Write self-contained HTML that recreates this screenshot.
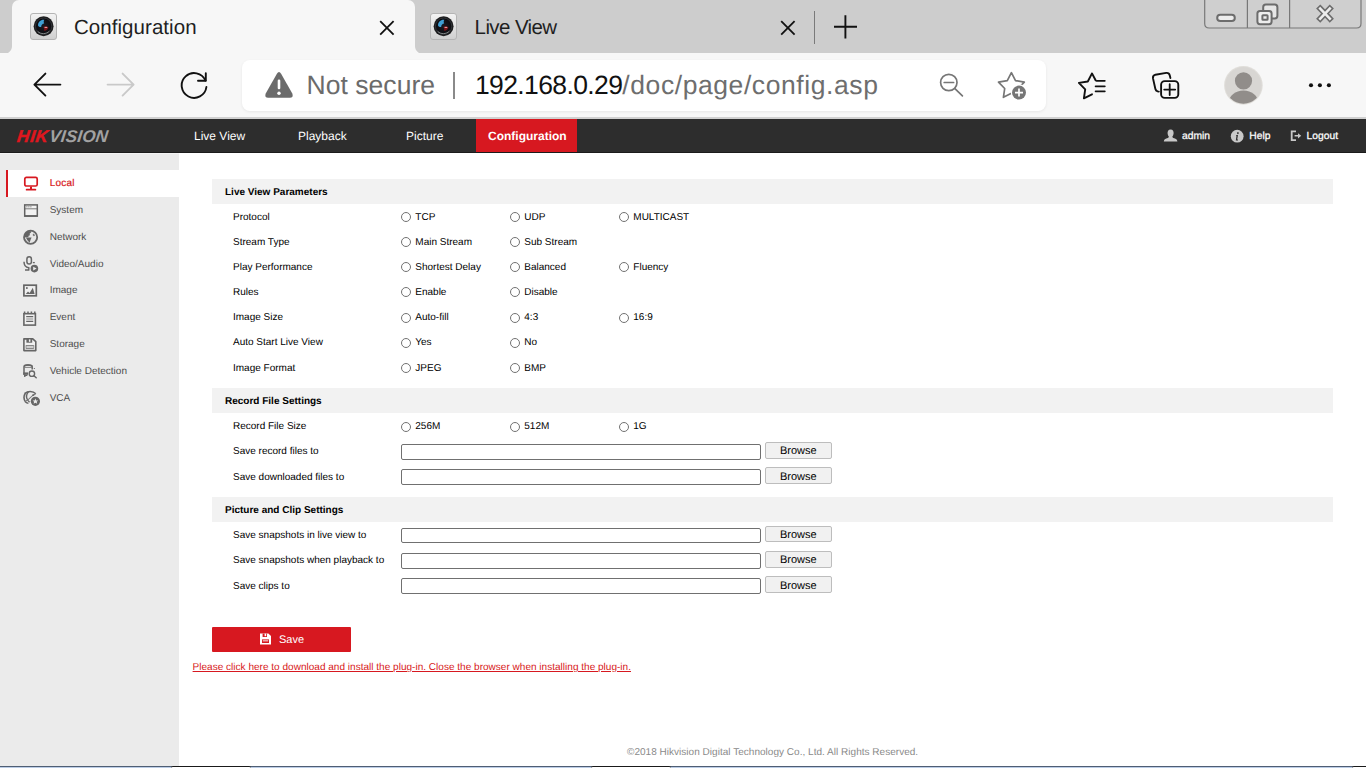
<!DOCTYPE html>
<html lang="en">
<head>
<meta charset="utf-8">
<title>Configuration</title>
<style>
html,body{margin:0;padding:0;}
body{width:1366px;height:768px;overflow:hidden;position:relative;background:#fff;font-family:"Liberation Sans",sans-serif;color:#000;text-rendering:geometricPrecision;}
.abs{position:absolute;}
/* ---------- browser chrome ---------- */
#tabstrip{left:0;top:0;width:1366px;height:53.5px;background:#cdcdcd;}
#toolbar{left:0;top:53px;width:1366px;height:64px;background:#f7f7f7;}
#tbline{left:0;top:117px;width:1366px;height:2px;background:#d0d0d0;}
#tab1{left:12px;top:0;width:403px;height:54px;background:#f7f7f7;border-radius:7px 7px 0 0;}
#tab1:before,#tab1:after{content:"";position:absolute;bottom:0;width:8px;height:8px;background:radial-gradient(circle at 0 0,rgba(247,247,247,0) 7.5px,#f7f7f7 8.5px);}
#tab1:before{left:-8px;}
#tab1:after{right:-8px;background:radial-gradient(circle at 100% 0,rgba(247,247,247,0) 7.5px,#f7f7f7 8.5px);}
.tabtitle{font-size:20.5px;color:#1f1f1f;white-space:nowrap;line-height:24px;}
#addr{left:242.3px;top:60px;width:803.7px;height:51px;background:#fff;border-radius:8px;box-shadow:0 1px 3px rgba(0,0,0,0.07);}
.urltxt{font-size:26.5px;line-height:34px;white-space:nowrap;}
/* ---------- page ---------- */
#nav{left:0;top:119px;width:1366px;height:33px;background:#2d2d2d;border-bottom:1px solid #1b1b1b;}
.navitem{top:0;height:34px;line-height:34px;color:#fff;font-size:12px;white-space:nowrap;}
#navactive{left:476px;top:0;width:101px;height:33px;background:#d71820;}
#side{left:0;top:153px;width:179px;height:613px;background:linear-gradient(#f3f3f3,#f3f3f3) 0 0/100% 1px no-repeat,#ebebeb;}
#sideactive{left:6px;top:17px;width:173px;height:27px;background:#fff;border-left:2px solid #d71820;box-sizing:border-box;}
.sitem{left:49.7px;font-size:10px;line-height:12px;color:#4d4d4d;white-space:nowrap;}
.sec{left:212px;width:1121px;height:25px;background:#f2f2f2;}
.sec span{position:absolute;left:13px;top:8px;font-size:10px;line-height:12px;font-weight:bold;color:#000;white-space:nowrap;}
.lbl{left:233px;font-size:10px;line-height:12px;color:#000;white-space:nowrap;}
.opt{font-size:10px;line-height:12px;color:#000;white-space:nowrap;}
.radio{width:8px;height:8px;border:1px solid #727272;border-radius:50%;background:#fff;}
.inp{left:401px;width:358px;height:13.4px;border:1px solid #707070;border-radius:2px;background:#fff;}
.btn{left:765px;width:64.7px;height:14.4px;border:1px solid #bdbdbd;background:#f1f1f1;border-radius:2px;font-size:11px;line-height:16.2px;text-align:center;color:#000;overflow:hidden;}
#save{left:212px;top:627px;width:139px;height:25px;background:#d71820;border-radius:1px;}
#save span{position:absolute;left:67px;top:7px;font-size:11px;line-height:13px;color:#fff;}
#plug{left:192.6px;top:662px;letter-spacing:0.02px;font-size:10px;line-height:12px;color:#d71820;text-decoration:underline;white-space:nowrap;}
#foot{left:627px;top:747px;letter-spacing:0.025px;font-size:10px;line-height:12px;color:#8a8a8a;white-space:nowrap;}
#botline{left:0;top:766px;width:1366px;height:1px;background:#4f5e74;border-bottom:1px solid #bccde6;}
.botbox{top:766px;height:1px;background:#fff;border-top:1px solid #1a1a1a;border-radius:2px 2px 0 0;}
</style>
</head>
<body>
<!-- browser chrome -->
<div id="tabstrip" class="abs"></div>
<div id="toolbar" class="abs"></div>
<div id="tbline" class="abs"></div>
<div id="tab1" class="abs"></div>
<div class="abs tabtitle" style="left:74px;top:16px;letter-spacing:0.05px;">Configuration</div>
<div class="abs tabtitle" style="left:474.6px;top:16px;letter-spacing:-0.6px;">Live View</div>
<div id="addr" class="abs"></div>
<div class="abs urltxt" style="left:306.6px;top:68px;color:#6b6b6b;letter-spacing:0.03px;">Not secure</div>
<div class="abs" style="left:453px;top:72px;width:1.8px;height:27px;background:#8a8a8a;"></div>
<div class="abs urltxt" style="left:475px;top:68px;color:#111;letter-spacing:-0.62px;">192.168.0.29<span style="color:#6e6e6e;letter-spacing:0.58px;">/doc/page/config.asp</span></div>


<!-- favicons -->
<svg class="abs" style="left:29px;top:12px;" width="29" height="29" viewBox="0 0 29 29">
  <defs>
    <linearGradient id="fvb" x1="0" y1="0" x2="0" y2="1"><stop offset="0" stop-color="#f4f4f4"/><stop offset="1" stop-color="#cfcfcf"/></linearGradient>
    <radialGradient id="fvl" cx="0.5" cy="0.5" r="0.5"><stop offset="0" stop-color="#1a1a22"/><stop offset="0.8" stop-color="#0c0c10"/><stop offset="1" stop-color="#2a2a2a"/></radialGradient>
  </defs>
  <g>
    <rect x="1.5" y="1.5" width="26" height="26" rx="2.5" fill="url(#fvb)" stroke="#b4b4b4" stroke-width="1"/>
    <circle cx="14.6" cy="14.2" r="10" fill="url(#fvl)"/>
    <circle cx="14.6" cy="14.2" r="8.2" fill="none" stroke="#3a3d40" stroke-width="0.8"/>
    <path d="M9 13.4 C9 9.6 12.2 7.2 15.4 7.8 C14.4 9 14.6 10.4 15.2 11.4 C13.4 11.6 12 13 12.2 15 C11 15.2 9.6 14.6 9 13.4 Z" fill="#3f9fd4"/>
    <path d="M14.2 15 C16 13.6 18.4 14 19.4 15.6 C18.8 18 16.6 19.2 14.8 18.6 C15.6 17.4 15.2 16 14.2 15 Z" fill="#7a1216"/>
    <rect x="15.6" y="14.9" width="2.6" height="1.1" fill="#e29a9a"/>
    <path d="M8.8 19.4 C11.6 22.4 17.4 22.4 20.4 19" fill="none" stroke="#9aa0a0" stroke-width="0.8"/>
  </g>
</svg>
<svg class="abs" style="left:429.3px;top:12px;" width="29" height="29" viewBox="0 0 29 29"><defs>
    <linearGradient id="fvb2" x1="0" y1="0" x2="0" y2="1"><stop offset="0" stop-color="#f4f4f4"/><stop offset="1" stop-color="#cfcfcf"/></linearGradient>
    <radialGradient id="fvl2" cx="0.5" cy="0.5" r="0.5"><stop offset="0" stop-color="#1a1a22"/><stop offset="0.8" stop-color="#0c0c10"/><stop offset="1" stop-color="#2a2a2a"/></radialGradient>
  </defs><g>
    <rect x="1.5" y="1.5" width="26" height="26" rx="2.5" fill="url(#fvb2)" stroke="#b4b4b4" stroke-width="1"/>
    <circle cx="14.6" cy="14.2" r="10" fill="url(#fvl2)"/>
    <circle cx="14.6" cy="14.2" r="8.2" fill="none" stroke="#3a3d40" stroke-width="0.8"/>
    <path d="M9 13.4 C9 9.6 12.2 7.2 15.4 7.8 C14.4 9 14.6 10.4 15.2 11.4 C13.4 11.6 12 13 12.2 15 C11 15.2 9.6 14.6 9 13.4 Z" fill="#3f9fd4"/>
    <path d="M14.2 15 C16 13.6 18.4 14 19.4 15.6 C18.8 18 16.6 19.2 14.8 18.6 C15.6 17.4 15.2 16 14.2 15 Z" fill="#7a1216"/>
    <rect x="15.6" y="14.9" width="2.6" height="1.1" fill="#e29a9a"/>
    <path d="M8.8 19.4 C11.6 22.4 17.4 22.4 20.4 19" fill="none" stroke="#9aa0a0" stroke-width="0.8"/>
  </g></svg>

<!-- tab close buttons, separator, new tab -->
<svg class="abs" style="left:376px;top:17px;" width="22" height="22" viewBox="0 0 22 22"><path d="M4.2 4.2 L17.6 17.6 M17.6 4.2 L4.2 17.6" stroke="#111" stroke-width="1.8" fill="none"/></svg>
<svg class="abs" style="left:777px;top:17px;" width="22" height="22" viewBox="0 0 22 22"><path d="M4.2 4.2 L17.6 17.6 M17.6 4.2 L4.2 17.6" stroke="#111" stroke-width="1.8" fill="none"/></svg>
<div class="abs" style="left:814px;top:11px;width:1.3px;height:33px;background:#7a7a7a;"></div>
<svg class="abs" style="left:832px;top:13px;" width="28" height="28" viewBox="0 0 28 28"><path d="M2 13.8 H25 M13.4 2.2 V25.4" stroke="#111" stroke-width="1.9" fill="none"/></svg>

<!-- window controls -->
<svg class="abs" style="left:1200px;top:0;" width="166" height="32" viewBox="0 0 166 32">
  <path d="M4.7 -1 V23.5 Q4.7 28 9.2 28 H156.5 Q161 28 161 23.5 V-1" fill="#cfcfcf" stroke="#787878" stroke-width="1.2"/>
  <path d="M47.4 0 V28 M89.6 0 V28" stroke="#787878" stroke-width="1.2"/>
  <rect x="17.2" y="14.8" width="17.6" height="6.2" rx="3.1" fill="#ededed" stroke="#6c6c6c" stroke-width="2"/>
  <rect x="63.2" y="4.6" width="14.2" height="13.8" rx="2.6" fill="#e6e6e6" stroke="#6c6c6c" stroke-width="2"/>
  <rect x="57.4" y="11" width="14.2" height="13.2" rx="2.6" fill="#ededed" stroke="#6c6c6c" stroke-width="2"/>
  <rect x="62.4" y="15.2" width="5.2" height="4.6" rx="0.6" fill="#ededed" stroke="#6c6c6c" stroke-width="2"/>
  <path d="M120.2 8.6 L129.8 18.6 M129.8 8.6 L120.2 18.6" stroke="#6c6c6c" stroke-width="5.8" stroke-linecap="square" fill="none"/>
  <path d="M120.2 8.6 L129.8 18.6 M129.8 8.6 L120.2 18.6" stroke="#ededed" stroke-width="2.6" stroke-linecap="square" fill="none"/>
</svg>

<!-- toolbar icons -->
<svg class="abs" style="left:29.5px;top:70px;" width="34" height="30" viewBox="0 0 34 30"><path d="M30.4 14.6 H4.6 M15.4 3.6 L4.4 14.6 L15.4 25.6" stroke="#111" stroke-width="1.9" fill="none" stroke-linecap="round" stroke-linejoin="round"/></svg>
<svg class="abs" style="left:104px;top:70px;" width="34" height="30" viewBox="0 0 34 30"><path d="M3.6 14.6 H29.4 M18.6 3.6 L29.6 14.6 L18.6 25.6" stroke="#c9c9c9" stroke-width="1.9" fill="none" stroke-linecap="round" stroke-linejoin="round"/></svg>
<svg class="abs" style="left:177.3px;top:71px;" width="34" height="34" viewBox="0 0 34 34"><path d="M28.5 9.6 A12.4 12.4 0 1 0 29.4 16" stroke="#111" stroke-width="1.9" fill="none" stroke-linecap="round"/><path d="M21 9.8 H28.8 V2.2" stroke="#111" stroke-width="1.9" fill="none" stroke-linecap="round" stroke-linejoin="round"/></svg>
<svg class="abs" style="left:263px;top:70px;" width="32" height="30" viewBox="0 0 32 30"><path d="M13.9 3.7 Q16 0.4 18.1 3.7 L29.3 23.4 Q30.8 27.6 26.8 27.8 H5.2 Q1.2 27.6 2.7 23.4 Z" fill="#6b6b6b"/><rect x="14.7" y="9.6" width="2.6" height="9.6" rx="1.2" fill="#fff"/><circle cx="16" cy="23.2" r="1.7" fill="#fff"/></svg>
<svg class="abs" style="left:936px;top:70px;" width="32" height="32" viewBox="0 0 32 32"><circle cx="12.8" cy="12.5" r="8.2" stroke="#767676" stroke-width="1.7" fill="none"/><path d="M8.2 12.5 H17.6 M18.9 18.7 L26.4 25.9" stroke="#767676" stroke-width="1.7" fill="none" stroke-linecap="round"/></svg>
<svg class="abs" style="left:995px;top:69px;" width="36" height="34" viewBox="0 0 36 34"><path d="M16.4 3.7 L20.5 11.6 L29.3 13.1 L23.1 19.5 L24.4 28.3 L16.4 24.3 L8.4 28.3 L9.7 19.5 L3.5 13.1 L12.3 11.6 Z" stroke="#767676" stroke-width="1.7" fill="none" stroke-linejoin="round"/><circle cx="24" cy="23.6" r="8.3" fill="#fff"/><circle cx="24" cy="23.6" r="7" fill="#767676"/><path d="M20 23.6 H28 M24 19.6 V27.6" stroke="#fff" stroke-width="1.7"/></svg>
<svg class="abs" style="left:1075px;top:70px;" width="34" height="32" viewBox="0 0 34 32"><path d="M20.6 10.3 L17 3.4 L12.8 11.5 L3.9 12.9 L10.2 19.4 L8.9 28.4 L17 24.3" stroke="#111" stroke-width="1.9" fill="none" stroke-linejoin="round" stroke-linecap="round"/><path d="M21.6 10.8 H29.8 M20.6 16.3 H29.8 M20.6 21.3 H29.8" stroke="#111" stroke-width="1.8" fill="none" stroke-linecap="round"/></svg>
<svg class="abs" style="left:1149px;top:69px;" width="34" height="34" viewBox="0 0 34 34"><path d="M9.8 22.6 L8.6 22.4 Q6.8 21.8 6.4 20 L4 9.4 Q3.5 6.4 6.4 5.7 L17.2 3.9 Q20.1 3.6 20.8 6.4 L21.4 9" stroke="#111" stroke-width="1.9" fill="none" stroke-linecap="round"/><rect x="12.1" y="12.1" width="17.2" height="16.8" rx="3.6" stroke="#111" stroke-width="1.9" fill="none"/><path d="M15.2 20.6 H26.2 M20.7 15.2 V26" stroke="#111" stroke-width="1.8" fill="none" stroke-linecap="round"/></svg>
<svg class="abs" style="left:1223px;top:65px;" width="42" height="42" viewBox="0 0 42 42"><defs><clipPath id="avc"><circle cx="20.4" cy="20.4" r="18.3"/></clipPath></defs><circle cx="20.4" cy="20.4" r="19.3" fill="#e0deda"/><circle cx="20.4" cy="20.4" r="18.3" fill="#d8d6d3"/><g clip-path="url(#avc)"><circle cx="20.5" cy="15.8" r="8.6" fill="#918d8a"/><ellipse cx="20.5" cy="37.5" rx="14.6" ry="12" fill="#918d8a"/></g></svg>
<svg class="abs" style="left:1306px;top:80px;" width="28" height="10" viewBox="0 0 28 10"><circle cx="5" cy="5.3" r="2.05" fill="#111"/><circle cx="13.9" cy="5.3" r="2.05" fill="#111"/><circle cx="22.9" cy="5.3" r="2.05" fill="#111"/></svg>

<!-- page nav -->
<div id="nav" class="abs">
  <div id="navactive" class="abs"></div>

  <div class="abs" id="logo" style="left:15.6px;top:8px;height:20px;line-height:20px;font-size:17px;font-weight:bold;font-style:italic;white-space:nowrap;letter-spacing:0.4px;transform:skewX(-7deg);transform-origin:0 100%;"><span style="color:#e0161e;-webkit-text-stroke:0.45px #e0161e;letter-spacing:0.75px;">HIK</span><span style="color:#a2a2a2;letter-spacing:0.2px;margin-left:0.6px;">VISION</span></div>
  <svg class="abs" style="left:1163px;top:10px;" width="16" height="14" viewBox="0 0 16 14"><path d="M7.6 0.6 C10 0.6 10.8 2.6 10.6 4.4 C10.4 6 9.8 6.8 9.4 7.4 C9.4 8.4 9.8 8.8 11.2 9.2 C13 9.8 14.2 10.2 14.4 12.6 H0.8 C1 10.2 2.2 9.8 4 9.2 C5.4 8.8 5.8 8.4 5.8 7.4 C5.4 6.8 4.8 6 4.6 4.4 C4.4 2.6 5.2 0.6 7.6 0.6 Z" fill="#c8c8c8"/></svg>
  <svg class="abs" style="left:1230px;top:10px;" width="15" height="15" viewBox="0 0 15 15"><circle cx="7.2" cy="7.2" r="6.4" fill="#c8c8c8"/><path d="M7.9 3.2 a0.9 0.9 0 1 1 -0.01 0 Z M6.2 5.9 H8 L7.2 10.6 H8 V11.4 H5.8 L6.5 6.8 H6 Z" fill="#2d2d2d"/></svg>
  <svg class="abs" style="left:1290px;top:11px;" width="13" height="12" viewBox="0 0 13 12"><path d="M6 1.4 H1.7 V10.2 H6" stroke="#c8c8c8" stroke-width="1.8" fill="none"/><path d="M4.6 5 H8 V3.2 L11.2 5.8 L8 8.4 V6.6 H4.6 Z" fill="#c8c8c8"/></svg>
  <div class="abs navitem" style="left:194px;">Live View</div>
  <div class="abs navitem" style="left:298px;">Playback</div>
  <div class="abs navitem" style="left:406px;">Picture</div>
  <div class="abs navitem" style="left:488px;font-weight:bold;">Configuration</div>
  <div class="abs navitem" style="left:1182px;top:1px;font-size:10.3px;-webkit-text-stroke:0.25px #fff;">admin</div>
  <div class="abs navitem" style="left:1249.3px;top:1px;font-size:10.3px;-webkit-text-stroke:0.25px #fff;">Help</div>
  <div class="abs navitem" style="left:1306.5px;top:1px;font-size:10.3px;-webkit-text-stroke:0.25px #fff;">Logout</div>
</div>

<!-- sidebar -->
<div id="side" class="abs">
  <div id="sideactive" class="abs"></div>

  <!-- sidebar icons (coords relative to #side: y = abs - 153) -->
  <svg class="abs" style="left:23px;top:23px;" width="16" height="15" viewBox="0 0 16 15"><rect x="1.8" y="1.4" width="12.4" height="8.6" rx="1.6" fill="none" stroke="#d71820" stroke-width="1.7"/><path d="M8 10.4 V13.4" stroke="#d71820" stroke-width="2"/><path d="M3.6 13.7 H12.4" stroke="#d71820" stroke-width="1.7" stroke-linecap="round"/></svg>
  <svg class="abs" style="left:23px;top:50px;" width="16" height="15" viewBox="0 0 16 15"><rect x="1.7" y="1.9" width="12.6" height="11.2" fill="#f2f2f2" stroke="#626262" stroke-width="1.5"/><path d="M1.7 5.8 H14.3" stroke="#6e6e6e" stroke-width="0.9"/><path d="M1.4 12.9 H14.6" stroke="#626262" stroke-width="1.5"/><path d="M3.4 3.8 H4.4 M5.4 3.8 H6.4 M7.4 3.8 H8.4" stroke="#555" stroke-width="0.9"/></svg>
  <svg class="abs" style="left:22px;top:76px;" width="18" height="17" viewBox="0 0 18 17"><circle cx="8.6" cy="8.3" r="6.6" fill="#e6e6e6" stroke="#666" stroke-width="1.8"/><path d="M2.4 8.4 C2.4 4.6 5 2.2 8.6 2 L9.2 3.2 L7.6 4.8 L8 6.2 L6.6 6.8 L6.4 8 Z" fill="#646464"/><path d="M3.8 8.4 H9.6 L8.6 10.8 L7.6 13.8 L5.4 11.2 Z" fill="#646464"/><path d="M11.4 4.4 L13.2 6.2 L11.8 7.2 L10.6 6 Z" fill="#777"/><path d="M2.8 9.6 L5 12.6 L7 14.4 L4.4 13.8 Z" fill="#6e6e6e"/></svg>
  <svg class="abs" style="left:22px;top:102px;" width="18" height="19" viewBox="0 0 18 19"><rect x="4.9" y="1.7" width="4.5" height="7.4" rx="2.25" fill="none" stroke="#666" stroke-width="1.5"/><path d="M2 6.8 C2 10.4 3.6 12.4 6.8 12.8 V14.8 M3 15 H7.4" fill="none" stroke="#666" stroke-width="1.5"/><path d="M10.8 7.6 H12.8" stroke="#666" stroke-width="1.3"/><circle cx="12.4" cy="13.6" r="3.8" fill="#666"/><path d="M11.2 11.7 L14.6 13.6 L11.2 15.5 Z" fill="#ebebeb"/></svg>
  <svg class="abs" style="left:22px;top:130px;" width="17" height="15" viewBox="0 0 17 15"><rect x="1.9" y="2.2" width="12.4" height="10.6" fill="#f0f0f0" stroke="#666" stroke-width="1.7"/><rect x="4" y="4.2" width="1.7" height="1.7" fill="#666"/><path d="M3.8 11 L6 8.4 L7.6 10 L10.8 4.8 L12.6 11 Z" fill="#666"/></svg>
  <svg class="abs" style="left:22px;top:157px;" width="16" height="17" viewBox="0 0 16 17"><rect x="1.9" y="3.7" width="11.5" height="11.4" fill="#f0f0f0" stroke="#666" stroke-width="1.6"/><path d="M2.6 1.4 V4 M6 1.4 V4 M9.4 1.4 V4 M12.8 1.4 V4" stroke="#666" stroke-width="1.5"/><path d="M4.2 6.6 H11.2 M4.2 11.4 H11.2" stroke="#666" stroke-width="1.1"/><path d="M4.2 9 H11.2" stroke="#999" stroke-width="1.1"/></svg>
  <svg class="abs" style="left:22px;top:184px;" width="16" height="16" viewBox="0 0 16 16"><path d="M1.9 1.9 H10.8 L13.8 4.6 V13.6 H1.9 Z" fill="#f0f0f0" stroke="#666" stroke-width="1.6" stroke-linejoin="round"/><rect x="4.4" y="1.8" width="5.8" height="3.9" fill="#666"/><rect x="6.9" y="2.4" width="1.5" height="2.4" fill="#f0f0f0"/><path d="M4 8.7 H11.8 M4 11.2 H11.8" stroke="#666" stroke-width="1.1"/><path d="M4 8.2 V11.7 M11.8 8.2 V11.7" stroke="#888" stroke-width="0.8"/></svg>
  <svg class="abs" style="left:22px;top:210px;" width="17" height="17" viewBox="0 0 17 17"><path d="M2 11.8 V3.6 Q2 1.9 5.8 1.9 H6.4 Q10.2 1.9 10.2 3.6 V6.6" fill="none" stroke="#666" stroke-width="1.5"/><path d="M2 2.9 Q6 1.2 10.2 2.9" fill="none" stroke="#666" stroke-width="1.6"/><path d="M2 4.4 H10.2" stroke="#777" stroke-width="0.9"/><path d="M1.3 9.4 H6 V11.8 H1.3 Z" fill="#666"/><path d="M2.8 11.6 V14 M2 12.4 H5.4" stroke="#666" stroke-width="1.4"/><circle cx="9.9" cy="10.7" r="2.7" fill="#ebebeb" stroke="#666" stroke-width="1.4"/><path d="M11.9 12.8 L14.2 14.8" stroke="#666" stroke-width="1.5" stroke-linecap="round"/><rect x="11.8" y="5" width="1" height="1" fill="#666"/></svg>
  <svg class="abs" style="left:23px;top:237px;" width="19" height="18" viewBox="0 0 19 18"><path d="M2.4 3 C0.6 6 0.8 9.6 2.6 12 C3.4 12.8 4.4 13.2 5.4 13.3" fill="none" stroke="#666" stroke-width="1.6"/><path d="M2 3.4 C4.6 1 9.8 0.6 12.8 3.8" fill="none" stroke="#666" stroke-width="1.5"/><path d="M5.4 1.8 C3.2 4.4 3 7.4 4.6 10 C5.2 11 5.8 11.6 6.6 12" fill="none" stroke="#666" stroke-width="1.4"/><path d="M2.2 11.4 C4.4 10.6 6.6 8.6 8 7 C9.2 5.6 10.6 4.6 12.6 4" fill="none" stroke="#777" stroke-width="1.1"/><rect x="9.4" y="4.4" width="1.8" height="1.3" fill="#555"/><circle cx="12.4" cy="11.3" r="4.6" fill="#666"/><path d="M12.4 8.5 L13.2 10.4 L15.2 10.5 L13.7 11.8 L14.2 13.8 L12.4 12.7 L10.6 13.8 L11.1 11.8 L9.6 10.5 L11.6 10.4 Z" fill="#ebebeb"/></svg>
  <div class="abs sitem" style="top:25px;color:#d71820;letter-spacing:0.25px;-webkit-text-stroke:0.2px #d71820;">Local</div>
  <div class="abs sitem" style="top:52px;">System</div>
  <div class="abs sitem" style="top:79px;">Network</div>
  <div class="abs sitem" style="top:106px;">Video/Audio</div>
  <div class="abs sitem" style="top:132px;">Image</div>
  <div class="abs sitem" style="top:159px;">Event</div>
  <div class="abs sitem" style="top:186px;">Storage</div>
  <div class="abs sitem" style="top:213px;">Vehicle Detection</div>
  <div class="abs sitem" style="top:240px;">VCA</div>
</div>

<!-- content -->
<div class="abs sec" style="top:179px;"><span>Live View Parameters</span></div>
<div class="abs sec" style="top:388px;"><span>Record File Settings</span></div>
<div class="abs sec" style="top:497px;"><span>Picture and Clip Settings</span></div>

<div class="abs lbl" style="top:211.5px;">Protocol</div>
<div class="abs radio" style="left:401.0px;top:212.0px;"></div>
<div class="abs opt" style="left:415.3px;top:211.5px;">TCP</div>
<div class="abs radio" style="left:510.0px;top:212.0px;"></div>
<div class="abs opt" style="left:524.3px;top:211.5px;">UDP</div>
<div class="abs radio" style="left:619.0px;top:212.0px;"></div>
<div class="abs opt" style="left:633.3px;top:211.5px;">MULTICAST</div>
<div class="abs lbl" style="top:236.5px;">Stream Type</div>
<div class="abs radio" style="left:401.0px;top:237.0px;"></div>
<div class="abs opt" style="left:415.3px;top:236.5px;">Main Stream</div>
<div class="abs radio" style="left:510.0px;top:237.0px;"></div>
<div class="abs opt" style="left:524.3px;top:236.5px;">Sub Stream</div>
<div class="abs lbl" style="top:261.5px;">Play Performance</div>
<div class="abs radio" style="left:401.0px;top:262.0px;"></div>
<div class="abs opt" style="left:415.3px;top:261.5px;">Shortest Delay</div>
<div class="abs radio" style="left:510.0px;top:262.0px;"></div>
<div class="abs opt" style="left:524.3px;top:261.5px;">Balanced</div>
<div class="abs radio" style="left:619.0px;top:262.0px;"></div>
<div class="abs opt" style="left:633.3px;top:261.5px;">Fluency</div>
<div class="abs lbl" style="top:286.5px;">Rules</div>
<div class="abs radio" style="left:401.0px;top:287.0px;"></div>
<div class="abs opt" style="left:415.3px;top:286.5px;">Enable</div>
<div class="abs radio" style="left:510.0px;top:287.0px;"></div>
<div class="abs opt" style="left:524.3px;top:286.5px;">Disable</div>
<div class="abs lbl" style="top:311.5px;">Image Size</div>
<div class="abs radio" style="left:401.0px;top:313.0px;"></div>
<div class="abs opt" style="left:415.3px;top:311.5px;">Auto-fill</div>
<div class="abs radio" style="left:510.0px;top:313.0px;"></div>
<div class="abs opt" style="left:524.3px;top:311.5px;">4:3</div>
<div class="abs radio" style="left:619.0px;top:313.0px;"></div>
<div class="abs opt" style="left:633.3px;top:311.5px;">16:9</div>
<div class="abs lbl" style="top:336.5px;">Auto Start Live View</div>
<div class="abs radio" style="left:401.0px;top:338.0px;"></div>
<div class="abs opt" style="left:415.3px;top:336.5px;">Yes</div>
<div class="abs radio" style="left:510.0px;top:338.0px;"></div>
<div class="abs opt" style="left:524.3px;top:336.5px;">No</div>
<div class="abs lbl" style="top:362.5px;">Image Format</div>
<div class="abs radio" style="left:401.0px;top:363.0px;"></div>
<div class="abs opt" style="left:415.3px;top:362.5px;">JPEG</div>
<div class="abs radio" style="left:510.0px;top:363.0px;"></div>
<div class="abs opt" style="left:524.3px;top:362.5px;">BMP</div>
<div class="abs lbl" style="top:420.5px;">Record File Size</div>
<div class="abs radio" style="left:401.0px;top:422.0px;"></div>
<div class="abs opt" style="left:415.3px;top:420.5px;">256M</div>
<div class="abs radio" style="left:510.0px;top:422.0px;"></div>
<div class="abs opt" style="left:524.3px;top:420.5px;">512M</div>
<div class="abs radio" style="left:619.0px;top:422.0px;"></div>
<div class="abs opt" style="left:633.3px;top:420.5px;">1G</div>
<div class="abs lbl" style="top:445.5px;">Save record files to</div>
<div class="abs inp" style="top:444.3px;"></div>
<div class="abs btn" style="top:442.3px;">Browse</div>
<div class="abs lbl" style="top:471.5px;">Save downloaded files to</div>
<div class="abs inp" style="top:469.2px;"></div>
<div class="abs btn" style="top:467.4px;line-height:18.6px;">Browse</div>
<div class="abs lbl" style="top:529.5px;">Save snapshots in live view to</div>
<div class="abs inp" style="top:527.8px;"></div>
<div class="abs btn" style="top:526px;">Browse</div>
<div class="abs lbl" style="top:554.5px;">Save snapshots when playback to</div>
<div class="abs inp" style="top:553.2px;"></div>
<div class="abs btn" style="top:551.4px;">Browse</div>
<div class="abs lbl" style="top:580.6px;">Save clips to</div>
<div class="abs inp" style="top:578.3px;"></div>
<div class="abs btn" style="top:576.3px;line-height:18.4px;">Browse</div>

<div id="save" class="abs"><svg class="abs" style="left:47px;top:6px;" width="13" height="13" viewBox="0 0 13 13"><path d="M1 0.6 H9.4 L12 3 V11.6 H1 Z" fill="#fff"/><rect x="3.6" y="0.6" width="4.4" height="3.4" fill="#d71820"/><rect x="5.6" y="0.6" width="1.6" height="2.6" fill="#fff"/><rect x="3" y="6.4" width="7" height="3.6" fill="#d71820"/><rect x="3.8" y="7.4" width="5.4" height="0.9" fill="#fff"/></svg><span>Save</span></div>
<div id="plug" class="abs">Please click here to download and install the plug-in. Close the browser when installing the plug-in.</div>
<div id="foot" class="abs">©2018 Hikvision Digital Technology Co., Ltd. All Rights Reserved.</div>
<div id="botline" class="abs"></div>
<div class="abs botbox" style="left:171px;width:80px;"></div>
<div class="abs botbox" style="left:590.5px;width:80.5px;"></div>
<div class="abs botbox" style="left:1352px;width:16px;"></div>
</body>
</html>
